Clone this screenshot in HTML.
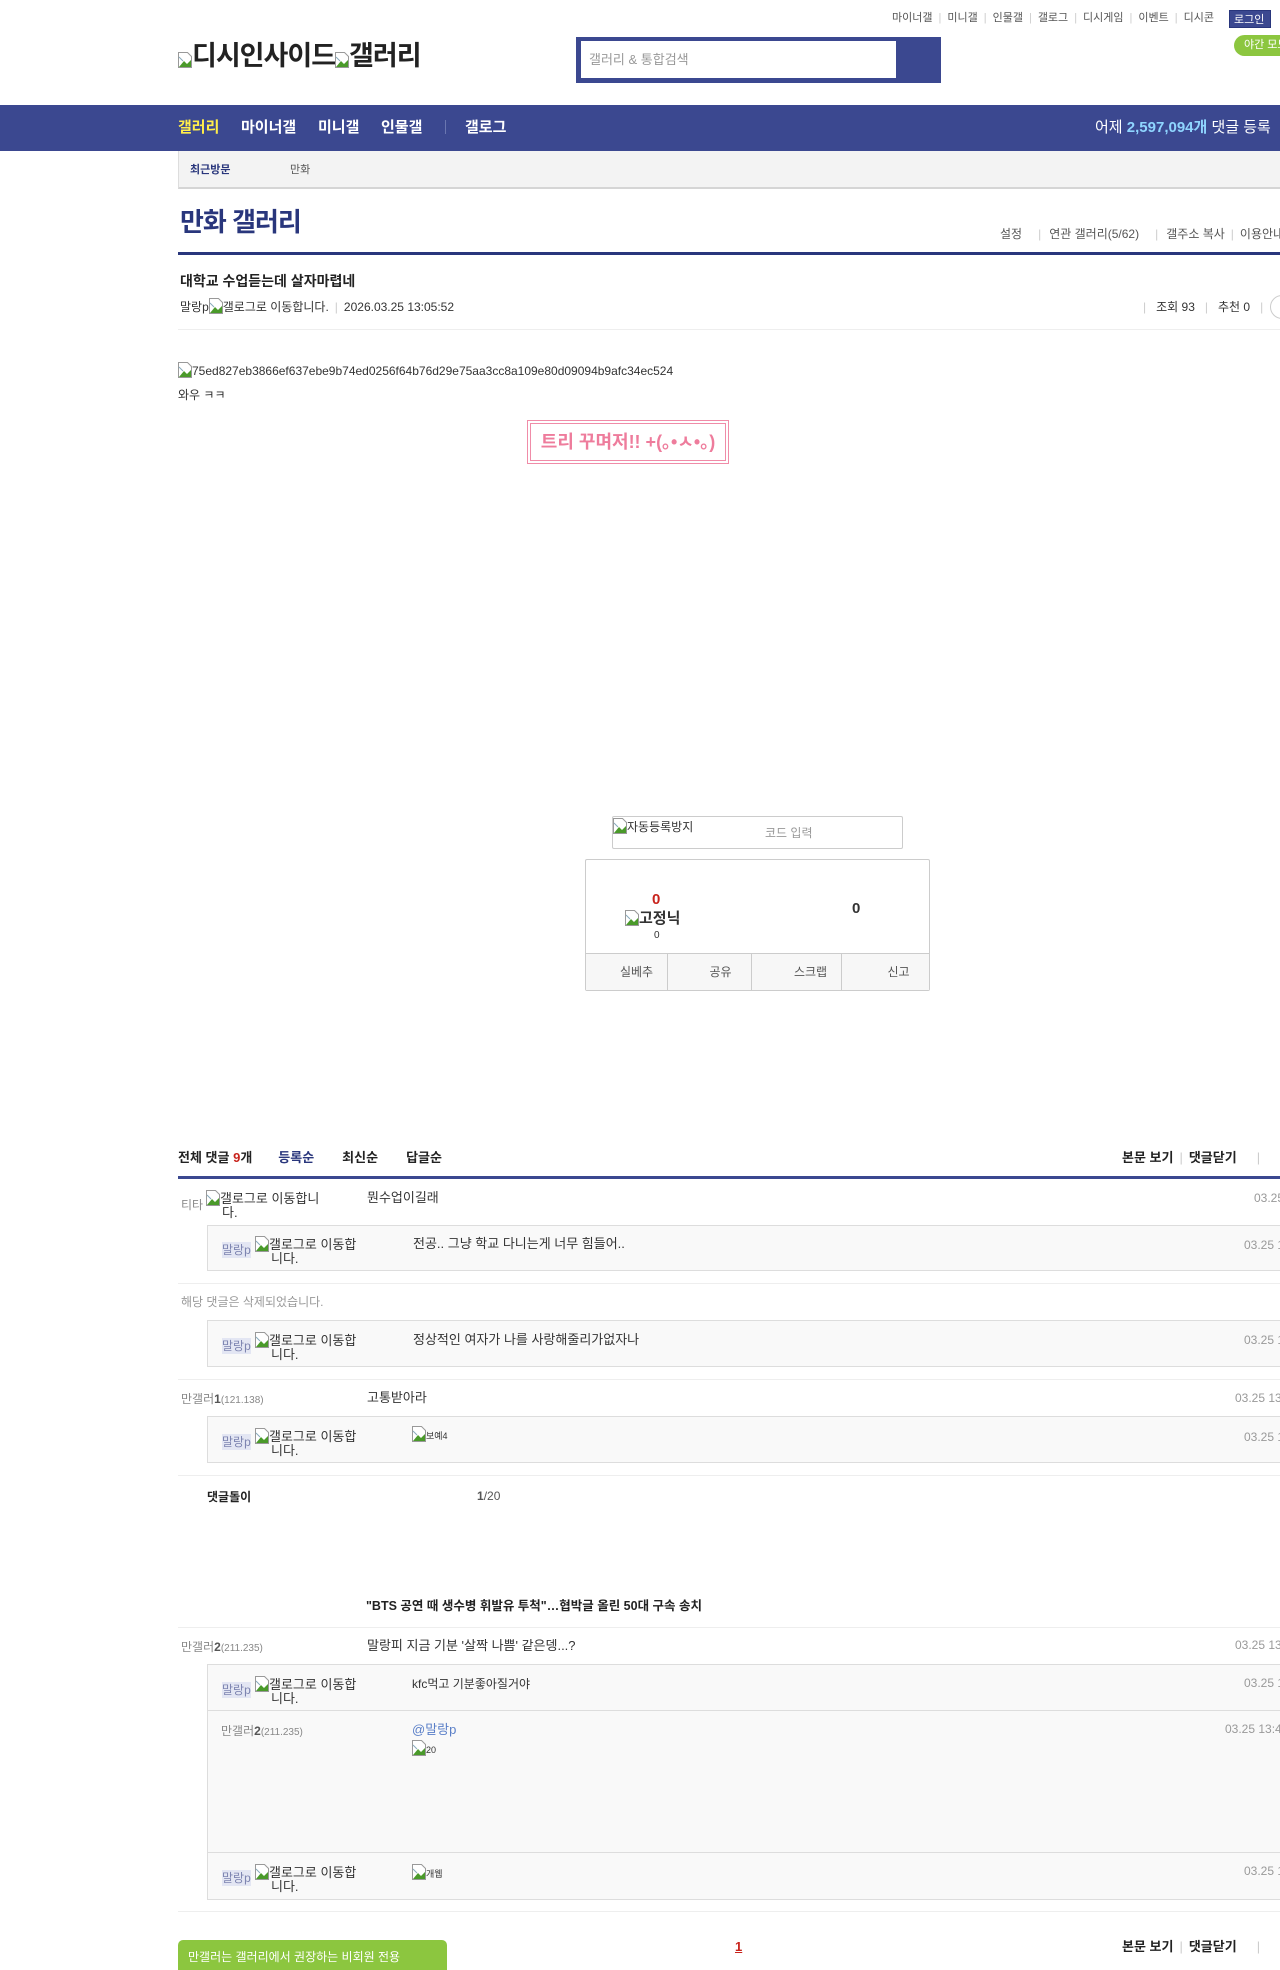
<!DOCTYPE html>
<html><head><meta charset="utf-8"><style>
*{margin:0;padding:0;box-sizing:border-box}
body{width:1280px;height:1960px;position:relative;overflow:hidden;background:#fff;font-family:"Liberation Sans","Noto Sans CJK KR",sans-serif;color:#333;font-size:13px}
.a{position:absolute;white-space:nowrap;line-height:16px}
.w{position:absolute;left:0;width:1280px;height:1960px}
.bi{display:inline-block;width:14px;height:16px;vertical-align:-3px;position:relative}
.bi svg{position:absolute;left:0;top:0}
.hl{position:absolute;left:178px;right:0;height:1px;background:#eee}
.rb{position:absolute;left:207px;right:-2px;background:#f9f9f9;border:1px solid #ddd}
.nick{background:#e3e6f3;color:#7d84b0;font-size:12px}
.dt{color:#999;font-size:12px}
.sep{color:#ccc;margin:0 6px}
</style></head><body>
<svg width="0" height="0" style="position:absolute"><defs><symbol id="b" viewBox="0 0 14 16"><path d="M0.5 0.5h9l4 4v11h-13z" fill="#fff" stroke="#999"/><path d="M1 15l5-6 3 3 4-4v7z" fill="#4a9a2a"/><path d="M1 5l4 4" stroke="#8ab" /></symbol></defs></svg>

<!-- top links -->
<div class="a" style="left:892px;top:10px;font-size:11px;color:#555">마이너갤<span class="sep">|</span>미니갤<span class="sep">|</span>인물갤<span class="sep">|</span>갤로그<span class="sep">|</span>디시게임<span class="sep">|</span>이벤트<span class="sep">|</span>디시콘</div>
<div class="a" style="left:1229px;top:10px;width:42px;height:18px;background:#3b4890;color:#fff;font-size:11px;line-height:18px;padding-left:4px;border:1px solid #29367c">로그인</div>
<div class="a" style="left:1234px;top:35px;width:60px;height:21px;background:#8cc63f;border-radius:11px;color:#fff;font-size:11px;line-height:21px;padding-left:10px">야간 모드</div>

<!-- logo -->
<div class="a" style="left:178px;top:40px;font-size:27px;line-height:32px;font-weight:bold;color:#222;letter-spacing:-1px"><span class="bi"><svg width="14" height="16"><use href="#b"/></svg></span>디시인사이드<span class="bi"><svg width="14" height="16"><use href="#b"/></svg></span>갤러리</div>

<!-- search -->
<div class="a" style="left:576px;top:37px;width:365px;height:46px;background:#3b4890"></div>
<div class="a" style="left:581px;top:41px;width:315px;height:37px;background:#fff;color:#999;font-size:13px;line-height:37px;padding-left:8px">갤러리 &amp; 통합검색</div>

<!-- nav -->
<div class="a" style="left:0;top:105px;width:1280px;height:46px;background:#3b4890"></div>
<div class="a" style="left:178px;top:120px;font-size:15px;font-weight:bold;color:#ffed4a">갤러리</div>
<div class="a" style="left:241px;top:120px;font-size:15px;font-weight:bold;color:#fff">마이너갤</div>
<div class="a" style="left:318px;top:120px;font-size:15px;font-weight:bold;color:#fff">미니갤</div>
<div class="a" style="left:381px;top:120px;font-size:15px;font-weight:bold;color:#fff">인물갤</div>
<div class="a" style="left:445px;top:120px;width:1px;height:14px;background:#6a76b0"></div>
<div class="a" style="left:465px;top:120px;font-size:15px;font-weight:bold;color:#fff">갤로그</div>
<div class="a" style="left:1095px;top:120px;font-size:15px;color:#fff">어제 <b style="color:#8fd5ff">2,597,094개</b> 댓글 등록</div>

<!-- recent bar -->
<div class="a" style="left:178px;top:151px;width:1110px;height:38px;background:#f3f3f3;border-left:1px solid #ddd;border-bottom:2px solid #d5d5d5"></div>
<div class="a" style="left:190px;top:162px;font-size:11px;font-weight:bold;color:#29367c">최근방문</div>
<div class="a" style="left:290px;top:162px;font-size:11px;color:#555">만화</div>

<!-- gallery title -->
<div class="a" style="left:180px;top:206px;font-size:26px;line-height:32px;font-weight:bold;color:#29367c;letter-spacing:-1px">만화 갤러리</div>
<div class="a" style="left:1000px;top:226px;font-size:12px;color:#555">설정<span class="sep" style="margin:0 8px 0 16px">|</span>연관 갤러리(5/62)<span class="sep" style="margin:0 8px 0 16px">|</span>갤주소 복사<span class="sep" style="margin:0 6px">|</span>이용안내</div>
<div class="a" style="left:178px;top:252px;width:1110px;height:3px;background:#29367c"></div>

<!-- post header -->
<div class="a" style="left:180px;top:273px;font-size:14px;font-weight:bold;color:#222">대학교 수업듣는데 살자마렵네</div>
<div class="a" style="left:180px;top:298px;font-size:12px;color:#333">말랑p<span class="bi"><svg width="14" height="16"><use href="#b"/></svg></span>갤로그로 이동합니다.<span class="sep">|</span>2026.03.25 13:05:52</div>
<div class="a" style="left:1133px;top:299px;font-size:12px;color:#333"><span class="sep" style="margin:0 10px">|</span>조회 93<span class="sep" style="margin:0 10px">|</span>추천 0<span class="sep" style="margin:0 10px">|</span></div>
<div class="a" style="left:1270px;top:295px;width:24px;height:24px;border:1px solid #ccc;border-radius:12px"></div>
<div class="hl" style="top:329px"></div>

<!-- body -->
<div class="a" style="left:178px;top:362px;font-size:12px;color:#333"><span class="bi"><svg width="14" height="16"><use href="#b"/></svg></span>75ed827eb3866ef637ebe9b74ed0256f64b76d29e75aa3cc8a109e80d09094b9afc34ec524</div>
<div class="a" style="left:178px;top:387px;font-size:12px;color:#333">와우 ㅋㅋ</div>
<div class="a" style="left:527px;top:420px;width:202px;height:44px;border:1px solid #f08ca8;padding:2px"><div style="border:1px solid #f08ca8;height:38px;text-align:center;line-height:36px;color:#ee7c9c;font-weight:bold;font-size:18px;white-space:nowrap">트리 꾸며저!! +(｡•ㅅ•｡)</div></div>

<!-- captcha -->
<div class="a" style="left:612px;top:816px;width:291px;height:33px;border:1px solid #ccc;border-radius:2px"></div>
<div class="a" style="left:613px;top:818px;font-size:12px;color:#333"><span class="bi"><svg width="14" height="16"><use href="#b"/></svg></span>자동등록방지</div>
<div class="a" style="left:765px;top:825px;font-size:12px;color:#999">코드 입력</div>

<!-- vote box -->
<div class="a" style="left:585px;top:859px;width:345px;height:132px;border:1px solid #ccc;border-radius:2px"></div>
<div class="a" style="left:652px;top:892px;font-size:15px;font-weight:bold;color:#c8231c">0</div>
<div class="a" style="left:625px;top:910px;font-size:15px;font-weight:bold;color:#333"><span class="bi"><svg width="14" height="16"><use href="#b"/></svg></span>고정닉</div>
<div class="a" style="left:654px;top:928px;font-size:10px;color:#333">0</div>
<div class="a" style="left:852px;top:901px;font-size:15px;font-weight:bold;color:#333">0</div>
<div class="a" style="left:586px;top:953px;width:343px;height:37px;background:#f7f7f7;border-top:1px solid #ccc;display:flex;font-size:12px;color:#555">
<div style="flex:1;border-right:1px solid #ccc;text-align:center;line-height:36px;padding-left:20px">실베추</div>
<div style="flex:1;border-right:1px solid #ccc;text-align:center;line-height:36px;padding-left:22px">공유</div>
<div style="flex:1;border-right:1px solid #ccc;text-align:center;line-height:36px;padding-left:28px">스크랩</div>
<div style="flex:1;text-align:center;line-height:36px;padding-left:26px">신고</div></div>

<!-- comments header -->
<div class="a" style="left:178px;top:1150px;font-size:13px;font-weight:bold;color:#222">전체 댓글 <span style="color:#c8231c">9</span>개<span style="color:#29367c;margin-left:26px">등록순</span><span style="margin-left:28px">최신순</span><span style="margin-left:28px">답글순</span></div>
<div class="a" style="left:1122px;top:1150px;font-size:13px;font-weight:bold;color:#222">본문 보기<span class="sep" style="font-weight:normal">|</span>댓글닫기<span class="sep" style="margin-left:20px;font-weight:normal">|</span></div>
<div class="a" style="left:178px;top:1176px;width:1110px;height:3px;background:#3b4890"></div>

<!-- comment 1 -->
<div class="a" style="left:181px;top:1197px;font-size:12px;color:#888">티타</div>
<div class="a" style="left:206px;top:1190px;font-size:13px;line-height:13px;color:#333"><span class="bi"><svg width="14" height="16"><use href="#b"/></svg></span>갤로그로 이동합니<br><span style="margin-left:16px">다.</span></div>
<div class="a" style="left:367px;top:1190px;color:#333">뭔수업이길래</div>
<div class="a dt" style="left:1254px;top:1190px">03.25 13:09:01</div>
<div class="rb" style="top:1225px;height:46px"></div>
<div class="a nick" style="left:222px;top:1242px">말랑p</div>
<div class="a" style="left:255px;top:1236px;line-height:13px;color:#333"><span class="bi"><svg width="14" height="16"><use href="#b"/></svg></span>갤로그로 이동합<br><span style="margin-left:16px">니다.</span></div>
<div class="a" style="left:413px;top:1236px;color:#333">전공.. 그냥 학교 다니는게 너무 힘들어..</div>
<div class="a dt" style="left:1244px;top:1237px">03.25 13:10:11</div>
<div class="hl" style="top:1283px"></div>

<div class="a" style="left:181px;top:1294px;font-size:12px;color:#999">해당 댓글은 삭제되었습니다.</div>
<div class="rb" style="top:1320px;height:47px"></div>
<div class="a nick" style="left:222px;top:1338px">말랑p</div>
<div class="a" style="left:255px;top:1332px;line-height:13px;color:#333"><span class="bi"><svg width="14" height="16"><use href="#b"/></svg></span>갤로그로 이동합<br><span style="margin-left:16px">니다.</span></div>
<div class="a" style="left:413px;top:1332px;color:#333">정상적인 여자가 나를 사랑해줄리가없자나</div>
<div class="a dt" style="left:1244px;top:1332px">03.25 13:12:11</div>
<div class="hl" style="top:1379px"></div>

<div class="a" style="left:181px;top:1391px;font-size:12px;color:#888">만갤러<b style="color:#555">1</b><span style="font-size:10px">(121.138)</span></div>
<div class="a" style="left:367px;top:1390px;color:#333">고통받아라</div>
<div class="a dt" style="left:1235px;top:1390px">03.25 13:15:11</div>
<div class="rb" style="top:1416px;height:47px"></div>
<div class="a nick" style="left:222px;top:1434px">말랑p</div>
<div class="a" style="left:255px;top:1428px;line-height:13px;color:#333"><span class="bi"><svg width="14" height="16"><use href="#b"/></svg></span>갤로그로 이동합<br><span style="margin-left:16px">니다.</span></div>
<div class="a" style="left:412px;top:1426px;font-size:9px;line-height:9px;color:#333"><span class="bi"><svg width="14" height="16"><use href="#b"/></svg></span>보예4</div>
<div class="a dt" style="left:1244px;top:1429px">03.25 13:16:11</div>
<div class="hl" style="top:1475px"></div>

<div class="a" style="left:207px;top:1489px;font-size:12px;font-weight:bold;color:#222">댓글돌이</div>
<div class="a" style="left:477px;top:1488px;font-size:12px;color:#555"><b>1</b>/20</div>

<div class="a" style="left:366px;top:1598px;font-size:12.5px;font-weight:bold;color:#222">"BTS 공연 때 생수병 휘발유 투척"…협박글 올린 50대 구속 송치</div>
<div class="hl" style="top:1627px"></div>

<div class="a" style="left:181px;top:1639px;font-size:12px;color:#888">만갤러<b style="color:#555">2</b><span style="font-size:10px">(211.235)</span></div>
<div class="a" style="left:367px;top:1638px;color:#333">말랑피 지금 기분 '살짝 나쁨' 같은뎅...?</div>
<div class="a dt" style="left:1235px;top:1637px">03.25 13:20:11</div>
<div class="rb" style="top:1664px;height:236px"></div>
<div class="a" style="left:208px;top:1710px;right:0;height:1px;background:#ddd"></div>
<div class="a" style="left:208px;top:1852px;right:0;height:1px;background:#ddd"></div>
<div class="a nick" style="left:222px;top:1682px">말랑p</div>
<div class="a" style="left:255px;top:1676px;line-height:13px;color:#333"><span class="bi"><svg width="14" height="16"><use href="#b"/></svg></span>갤로그로 이동합<br><span style="margin-left:16px">니다.</span></div>
<div class="a" style="left:412px;top:1676px;font-size:12px;color:#333">kfc먹고 기분좋아질거야</div>
<div class="a dt" style="left:1244px;top:1675px">03.25 13:22:11</div>
<div class="a" style="left:221px;top:1723px;font-size:12px;color:#888">만갤러<b style="color:#555">2</b><span style="font-size:10px">(211.235)</span></div>
<div class="a" style="left:412px;top:1722px;color:#5a7fc8">@말랑p</div>
<div class="a" style="left:412px;top:1740px;font-size:9px;line-height:9px;color:#333"><span class="bi"><svg width="14" height="16"><use href="#b"/></svg></span>20</div>
<div class="a dt" style="left:1225px;top:1721px">03.25 13:40:11</div>
<div class="a nick" style="left:222px;top:1870px">말랑p</div>
<div class="a" style="left:255px;top:1864px;line-height:13px;color:#333"><span class="bi"><svg width="14" height="16"><use href="#b"/></svg></span>갤로그로 이동합<br><span style="margin-left:16px">니다.</span></div>
<div class="a" style="left:412px;top:1864px;font-size:9px;line-height:9px;color:#333"><span class="bi"><svg width="14" height="16"><use href="#b"/></svg></span>개웹</div>
<div class="a dt" style="left:1244px;top:1863px">03.25 13:45:11</div>
<div class="hl" style="top:1911px"></div>

<div class="a" style="left:178px;top:1940px;width:269px;height:30px;background:#8cc63f;border-radius:5px 5px 0 0;color:#fff;font-size:12px;line-height:16px;padding:9px 0 0 10px">만갤러는 갤러리에서 권장하는 비회원 전용</div>
<div class="a" style="left:735px;top:1939px;font-size:13px;font-weight:bold;color:#c8231c;text-decoration:underline">1</div>
<div class="a" style="left:1122px;top:1939px;font-size:13px;font-weight:bold;color:#222">본문 보기<span class="sep" style="font-weight:normal">|</span>댓글닫기<span class="sep" style="margin-left:20px;font-weight:normal">|</span></div>
</body></html>
